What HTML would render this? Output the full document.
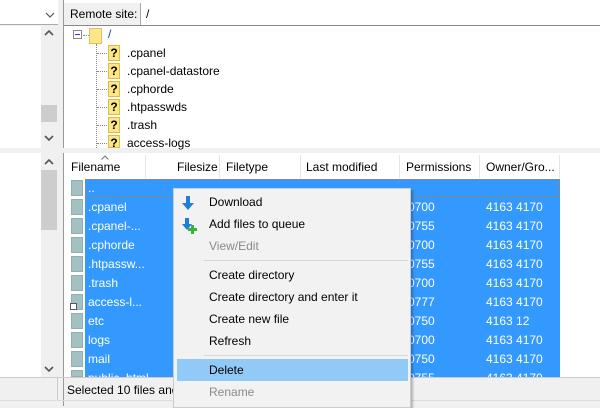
<!DOCTYPE html>
<html><head><meta charset="utf-8"><style>
*{margin:0;padding:0;box-sizing:border-box}
body{width:600px;height:406px;overflow:hidden;background:#f0f0f0;font-family:"Liberation Sans",sans-serif;font-size:12px;color:#000;position:relative}
.a{position:absolute}
.t{position:absolute;white-space:nowrap;line-height:14px}
.q{position:absolute;width:12px;height:16px;background:#fde58a;border:1px solid #e3b94a;font-weight:bold;font-size:12px;text-align:center;line-height:14px}
.fi{position:absolute;left:71px;width:12px;height:16px;background:#a3c0c2;border:1px solid #92b0b2}
.w{color:#fff}
.m{position:absolute;left:35px;white-space:nowrap;line-height:14px}
.g{color:#8a8a8a}
.dot{position:absolute;border-top:1px dotted #888;height:0}
</style></head><body>
<!-- left pane top -->
<div class="a" style="left:0;top:0;width:58px;height:25px;background:#fff;border-bottom:1px solid #aaa"></div>
<svg class="a" style="left:45px;top:12px" width="10" height="6"><polyline points="1,1 5,5 9,1" fill="none" stroke="#555" stroke-width="1.2"/></svg>
<div class="a" style="left:0;top:26px;width:41px;height:122px;background:#fff"></div>
<div class="a" style="left:41px;top:26px;width:17px;height:122px;background:#f0f0f0"></div>
<svg class="a" style="left:44px;top:30px" width="10" height="6"><polyline points="1,5 5,1 9,5" fill="none" stroke="#555" stroke-width="1.6"/></svg>
<div class="a" style="left:41px;top:105px;width:16px;height:17px;background:#cdcdcd"></div>
<svg class="a" style="left:44px;top:135px" width="10" height="6"><polyline points="1,1 5,5 9,1" fill="none" stroke="#555" stroke-width="1.6"/></svg>
<!-- right pane top -->
<div class="a" style="left:63px;top:0;width:1px;height:148px;background:#999"></div>
<div class="a" style="left:64px;top:0;width:536px;height:3px;background:#fff"></div>
<div class="a" style="left:64px;top:3px;width:77px;height:22px;background:#f0f0f0;border-right:1px solid #aaa"></div>
<div class="t" style="left:70px;top:7px">Remote site:</div>
<div class="a" style="left:141px;top:3px;width:459px;height:22px;background:#fff"></div>
<div class="t" style="left:146px;top:7px">/</div>
<div class="a" style="left:64px;top:25px;width:536px;height:1px;background:#888"></div>
<div class="a" style="left:64px;top:26px;width:536px;height:122px;background:#fff"></div>
<div class="a" style="left:73px;top:30px;width:9px;height:9px;border:1px solid #888;background:#fff"></div>
<div class="a" style="left:75px;top:34px;width:5px;height:1px;background:#33f"></div>
<div class="dot" style="left:83px;top:35px;width:6px"></div>
<div class="a" style="left:89px;top:28px;width:13px;height:16px;background:#fde58a;border:1px solid #e3c060"></div>
<div class="t" style="left:108px;top:27px;color:#1a3ea0">/</div>
<div class="a" style="left:96px;top:44px;height:104px;border-left:1px dotted #888"></div>
<div class="dot" style="left:97px;top:53px;width:10px"></div><div class="q" style="left:108px;top:45px">?</div><div class="t" style="left:127px;top:46px">.cpanel</div>
<div class="dot" style="left:97px;top:71px;width:10px"></div><div class="q" style="left:108px;top:63px">?</div><div class="t" style="left:127px;top:64px">.cpanel-datastore</div>
<div class="dot" style="left:97px;top:89px;width:10px"></div><div class="q" style="left:108px;top:81px">?</div><div class="t" style="left:127px;top:82px">.cphorde</div>
<div class="dot" style="left:97px;top:107px;width:10px"></div><div class="q" style="left:108px;top:99px">?</div><div class="t" style="left:127px;top:100px">.htpasswds</div>
<div class="dot" style="left:97px;top:125px;width:10px"></div><div class="q" style="left:108px;top:117px">?</div><div class="t" style="left:127px;top:118px">.trash</div>
<div class="dot" style="left:97px;top:143px;width:10px"></div><div class="q" style="left:108px;top:135px;height:13px">?</div><div class="t" style="left:127px;top:136px">access-logs</div>
<!-- left pane bottom -->
<div class="a" style="left:0;top:153px;width:41px;height:224px;background:#fff"></div>
<svg class="a" style="left:44px;top:159px" width="10" height="6"><polyline points="1,5 5,1 9,5" fill="none" stroke="#555" stroke-width="1.6"/></svg>
<div class="a" style="left:41px;top:170px;width:16px;height:60px;background:#cdcdcd"></div>
<svg class="a" style="left:44px;top:366px" width="10" height="6"><polyline points="1,1 5,5 9,1" fill="none" stroke="#555" stroke-width="1.6"/></svg>
<!-- right pane bottom -->
<div class="a" style="left:63px;top:153px;width:1px;height:253px;background:#999"></div>
<div class="a" style="left:64px;top:153px;width:536px;height:224px;background:#fff"></div>
<svg class="a" style="left:101px;top:155px" width="8" height="5"><polyline points="0.5,4.5 4,1 7.5,4.5" fill="none" stroke="#777" stroke-width="1"/></svg>
<div class="a" style="left:145px;top:155px;width:1px;height:23px;background:#e5e5e5"></div>
<div class="a" style="left:219px;top:155px;width:1px;height:23px;background:#e5e5e5"></div>
<div class="a" style="left:300px;top:155px;width:1px;height:23px;background:#e5e5e5"></div>
<div class="a" style="left:399px;top:155px;width:1px;height:23px;background:#e5e5e5"></div>
<div class="a" style="left:479px;top:155px;width:1px;height:23px;background:#e5e5e5"></div>
<div class="a" style="left:559px;top:155px;width:1px;height:23px;background:#e5e5e5"></div>
<div class="t" style="left:71px;top:160px">Filename</div>
<div class="t" style="left:177px;top:160px">Filesize</div>
<div class="t" style="left:226px;top:160px">Filetype</div>
<div class="t" style="left:306px;top:160px">Last modified</div>
<div class="t" style="left:406px;top:160px">Permissions</div>
<div class="t" style="left:486px;top:160px">Owner/Gro...</div>
<div class="a" style="left:85px;top:179px;width:475px;height:198px;background:#3399ff;overflow:hidden">
<div class="t w" style="left:3px;top:192px">public_html</div>
<div class="t w" style="left:323px;top:192px">0755</div><div class="t w" style="left:401px;top:192px">4163 4170</div>
</div>
<div class="a" style="left:85px;top:179px;width:475px;height:19px;border:1px dotted #c77a20"></div>
<div class="fi" style="top:180px"></div><div class="t w" style="left:88px;top:181px">..</div>
<div class="fi" style="top:199px"></div><div class="t w" style="left:88px;top:200px">.cpanel</div>
<div class="fi" style="top:218px"></div><div class="t w" style="left:88px;top:219px">.cpanel-...</div>
<div class="fi" style="top:237px"></div><div class="t w" style="left:88px;top:238px">.cphorde</div>
<div class="fi" style="top:256px"></div><div class="t w" style="left:88px;top:257px">.htpassw...</div>
<div class="fi" style="top:275px"></div><div class="t w" style="left:88px;top:276px">.trash</div>
<div class="fi" style="top:294px"></div><div class="a" style="left:70px;top:303px;width:7px;height:7px;background:#fff;border:1px solid #556"></div><div class="t w" style="left:88px;top:295px">access-l...</div>
<div class="fi" style="top:313px"></div><div class="t w" style="left:88px;top:314px">etc</div>
<div class="fi" style="top:332px"></div><div class="t w" style="left:88px;top:333px">logs</div>
<div class="fi" style="top:351px"></div><div class="t w" style="left:88px;top:352px">mail</div>
<div class="fi" style="top:370px;height:7px"></div>
<div class="t w" style="left:408px;top:200px">0700</div><div class="t w" style="left:486px;top:200px">4163 4170</div>
<div class="t w" style="left:408px;top:219px">0755</div><div class="t w" style="left:486px;top:219px">4163 4170</div>
<div class="t w" style="left:408px;top:238px">0700</div><div class="t w" style="left:486px;top:238px">4163 4170</div>
<div class="t w" style="left:408px;top:257px">0755</div><div class="t w" style="left:486px;top:257px">4163 4170</div>
<div class="t w" style="left:408px;top:276px">0700</div><div class="t w" style="left:486px;top:276px">4163 4170</div>
<div class="t w" style="left:408px;top:295px">0777</div><div class="t w" style="left:486px;top:295px">4163 4170</div>
<div class="t w" style="left:408px;top:314px">0750</div><div class="t w" style="left:486px;top:314px">4163 12</div>
<div class="t w" style="left:408px;top:333px">0700</div><div class="t w" style="left:486px;top:333px">4163 4170</div>
<div class="t w" style="left:408px;top:352px">0750</div><div class="t w" style="left:486px;top:352px">4163 4170</div>
<!-- status bar -->
<div class="a" style="left:0;top:377px;width:600px;height:1px;background:#ccc"></div>
<div class="a" style="left:57px;top:378px;width:1px;height:22px;background:#ccc"></div>
<div class="a" style="left:0;top:400px;width:600px;height:1px;background:#ddd"></div>
<div class="t" style="left:67px;top:383px">Selected 10 files and</div>
<!-- context menu -->
<div class="a" style="left:173px;top:188px;width:238px;height:220px;background:#f2f2f2;border:1px solid #ccc;box-shadow:2px 2px 2px rgba(0,0,0,.25)">
<svg class="a" style="left:6px;top:6px" width="16" height="16"><path d="M6 1h4v7h4l-6 7-6-7h4z" fill="#1e7fd8"/></svg>
<svg class="a" style="left:6px;top:28px" width="18" height="18"><path d="M5 1h4v6h3l-5 6-5-6h3z" fill="#1e7fd8"/><path d="M11 8h3v3h3v3h-3v3h-3v-3H8v-3h3z" fill="#3bb03b"/></svg>
<div class="m" style="top:6px">Download</div>
<div class="m" style="top:28px">Add files to queue</div>
<div class="m g" style="top:50px">View/Edit</div>
<div class="a" style="left:30px;top:71px;width:204px;height:1px;background:#d7d7d7"></div>
<div class="m" style="top:79px">Create directory</div>
<div class="m" style="top:101px">Create directory and enter it</div>
<div class="m" style="top:123px">Create new file</div>
<div class="m" style="top:145px">Refresh</div>
<div class="a" style="left:30px;top:166px;width:204px;height:1px;background:#d7d7d7"></div>
<div class="a" style="left:3px;top:170px;width:231px;height:22px;background:#91c9f7"></div>
<div class="m" style="top:174px">Delete</div>
<div class="m g" style="top:196px">Rename</div>
</div>
</body></html>
